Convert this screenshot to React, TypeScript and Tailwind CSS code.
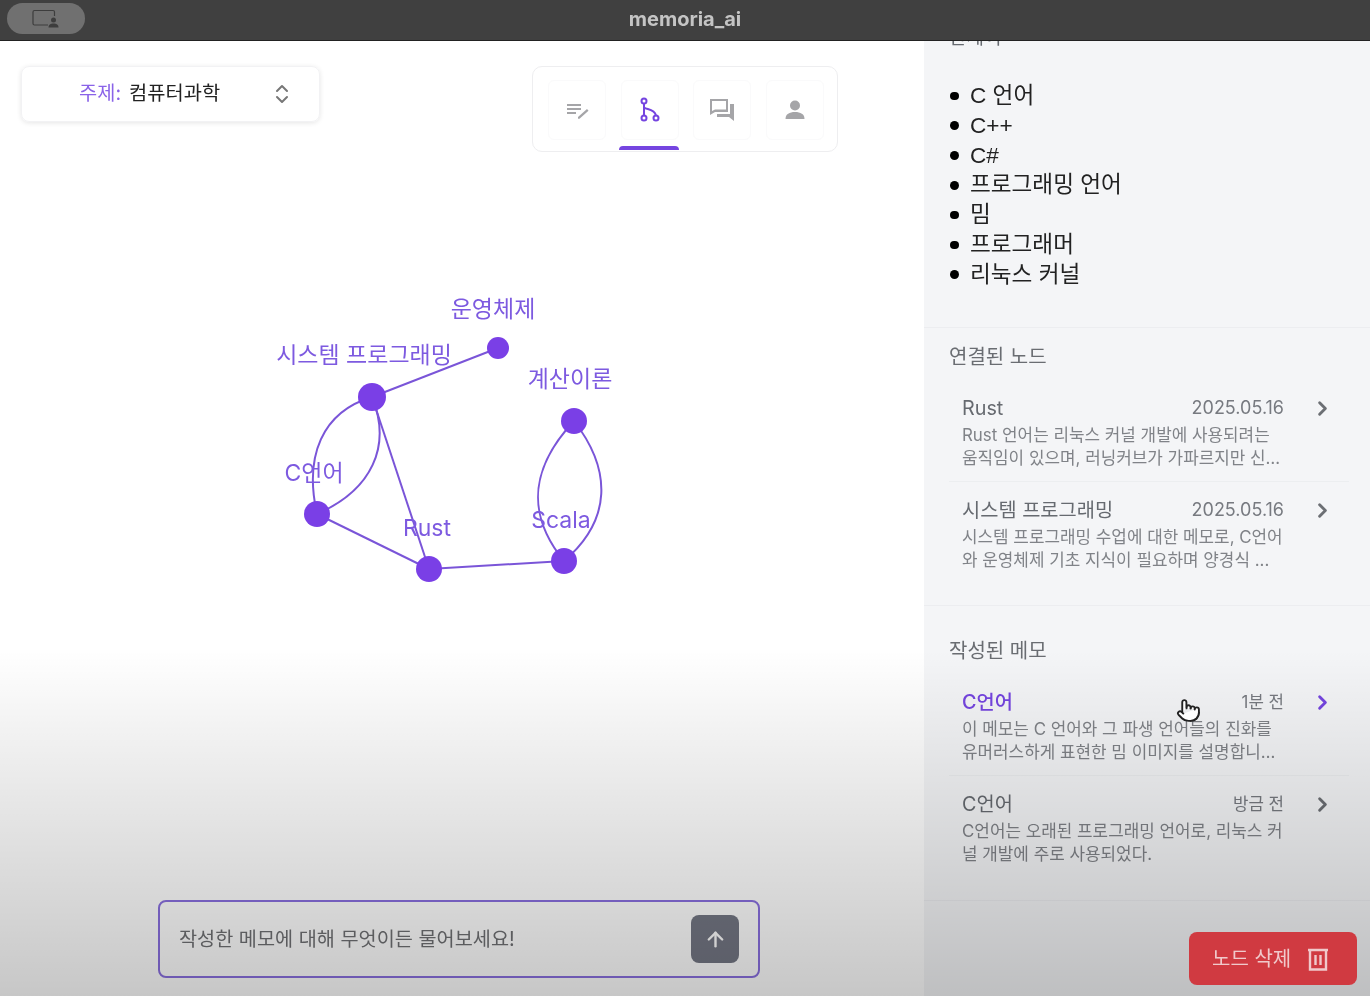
import { ArrowUp, ChevronRight, ChevronsUpDown, Pointer } from 'lucide-react';

const KO = 'font-["Inter","Noto_Sans_CJK_KR",sans-serif]';

const keywords = ['C 언어', 'C++', 'C#', '프로그래밍 언어', '밈', '프로그래머', '리눅스 커널'];

type Item = { title: string; date: string; active?: boolean; relative?: boolean; lines: string[] };

const linkedNodes: Item[] = [
    {
        title: 'Rust',
        date: '2025.05.16',
        lines: ['Rust 언어는 리눅스 커널 개발에 사용되려는', '움직임이 있으며, 러닝커브가 가파르지만 신…'],
    },
    {
        title: '시스템 프로그래밍',
        date: '2025.05.16',
        lines: ['시스템 프로그래밍 수업에 대한 메모로, C언어', '와 운영체제 기초 지식이 필요하며 양경식 ...'],
    },
];

const memos: Item[] = [
    {
        title: 'C언어',
        date: '1분 전',
        active: true,
        relative: true,
        lines: ['이 메모는 C 언어와 그 파생 언어들의 진화를', '유머러스하게 표현한 밈 이미지를 설명합니…'],
    },
    {
        title: 'C언어',
        date: '방금 전',
        relative: true,
        lines: ['C언어는 오래된 프로그래밍 언어로, 리눅스 커', '널 개발에 주로 사용되었다.'],
    },
];

const nodes = [
    { label: '운영체제', x: 498, y: 348, r: 11, lx: 493, ly: 317 },
    { label: '시스템 프로그래밍', x: 372, y: 397, r: 14, lx: 364, ly: 363 },
    { label: '계산이론', x: 574, y: 421, r: 13, lx: 570, ly: 387 },
    { label: 'C언어', x: 317, y: 514, r: 13, lx: 314, ly: 481 },
    { label: 'Rust', x: 429, y: 569, r: 13, lx: 427, ly: 536 },
    { label: 'Scala', x: 564, y: 561, r: 13, lx: 561, ly: 528 },
];

const edges = [
    'M372 397 L498 348',
    'M372 397 L429 569',
    'M317 514 L429 569',
    'M429 569 L564 561',
    'M372 397 C322 412 304 456 317 514',
    'M372 397 C392 446 372 490 317 514',
    'M574 421 C532 466 524 512 564 561',
    'M574 421 C612 470 612 520 564 561',
];

function NodeRow({ item }: { item: Item }) {
    return (
        <div className="flex h-[102px] items-start border-b border-[#eceef0] pl-[13px] pr-[15px] pt-[13px] last:border-b-0">
            <div className="w-[322px] shrink-0">
                <div className="flex items-center justify-between">
                    <span className={`text-[19.800px] leading-[30px] ${item.active ? 'font-medium text-[#7545e0]' : 'text-[#666a70]'}`}>{item.title}</span>
                    <span className={`leading-[30px] text-[#777a80] ${item.relative ? 'text-[16.800px]' : 'text-[18px]'}`}>{item.date}</span>
                </div>
                <div className="mt-[1px] text-[16.900px] leading-[22.5px] whitespace-nowrap text-[#808388]">
                    {item.lines.map((line) => (
                        <div key={line}>{line}</div>
                    ))}
                </div>
            </div>
            <ChevronRight
                size={23}
                strokeWidth={3}
                className={`ml-[27px] mt-[4px] shrink-0 ${item.active ? 'text-[#7545e0]' : 'text-[#6c6f74]'}`}
            />
        </div>
    );
}

export default function App() {
    return (
        <div className={`relative flex h-[996px] w-[1370px] flex-col overflow-hidden bg-white blur-[0.5px] ${KO}`}>
            {/* Title bar */}
            <div className="relative flex h-[41px] shrink-0 items-center justify-center border-b border-[#222] bg-[#404040]">
                <div className="absolute left-[7px] top-[3px] flex h-[31px] w-[78px] items-center justify-center rounded-full bg-[#707070]">
                    <svg width="28" height="20" viewBox="0 0 28 20" fill="none">
                        <path d="M16 16H2.5A1.5 1.5 0 0 1 1 14.500V3A1.500 1.500 0 0 1 2.500 1.500H21A1.500 1.500 0 0 1 22.500 3V7" stroke="#3d3d3d" strokeWidth="1.2" />
                        <circle cx="21.500" cy="11" r="2.500" fill="#3d3d3d" />
                        <path d="M16.500 18.500C16.500 15.500 18.500 14.500 21.500 14.500S26.500 15.500 26.500 18.500Z" fill="#3d3d3d" />
                    </svg>
                </div>
                <span className="-mt-[2px] text-[20px] font-bold text-[#c4c4c4]">memoria_ai</span>
            </div>

            <div className="flex min-h-0 flex-1">
                {/* Graph side */}
                <div className="flex w-[924px] shrink-0 flex-col">
                    <div className="flex h-[111px] shrink-0 items-start justify-between pl-[21px] pr-[86px] pt-[25px]">
                        <div className="flex h-[56px] w-[299px] items-center rounded-lg border border-[#f2f2f4] pl-[57px] pr-[25px] shadow-[0_1px_5px_rgba(0,0,0,0.1)]">
                            <span className="text-[19.800px] text-[#8a63e8]">주제:</span>
                            <span className="ml-[8px] text-[19.800px] text-[#222]">컴퓨터과학</span>
                            <ChevronsUpDown size={24} strokeWidth={2} className="ml-auto text-[#777]" />
                        </div>
                        <div className="flex h-[86px] w-[306px] gap-[14.5px] rounded-[10px] border border-[#eeeef0] pl-[15px] pt-[13px]">
                            <div className="flex h-[60px] w-[58px] items-center justify-center rounded-md border border-[#fafafb]">
                                <svg width="24" height="24" viewBox="0 0 24 24" fill="#a5a5a8">
                                    <path d="M2 6h14v2H2zM2 10h14v2H2zM2 14h9v2H2zM13 19l9-8 1.500 1.700-9 8H13z" />
                                </svg>
                            </div>
                            <div className="relative flex h-[60px] w-[58px] items-center justify-center rounded-md border border-[#fafafb]">
                                <svg width="24" height="26" viewBox="0 0 24 26" fill="none" stroke="#7545e0" strokeWidth="2">
                                    <circle cx="6" cy="4" r="2.500" />
                                    <circle cx="6" cy="21" r="2.500" />
                                    <circle cx="18" cy="21" r="2.500" />
                                    <path d="M6 6.500V18.500M6 10C7 13 16 11 18 18.500" />
                                </svg>
                                <div className="absolute bottom-[-11px] left-[-3px] h-[4px] w-[60px] rounded-t-[4px] bg-[#7545e0]" />
                            </div>
                            <div className="flex h-[60px] w-[58px] items-center justify-center rounded-md border border-[#fafafb]">
                                <svg width="26" height="24" viewBox="0 0 26 24" fill="#a5a5a8">
                                    <path d="M1 1h18v13H6l-5 3zM3 3v10l3-1.500h11V3z" />
                                    <path d="M21 6h4v17l-5-4H8v-3h13z" />
                                </svg>
                            </div>
                            <div className="flex h-[60px] w-[58px] items-center justify-center rounded-md border border-[#fafafb]">
                                <svg width="24" height="24" viewBox="0 0 24 24" fill="#a5a5a8">
                                    <circle cx="12" cy="7.500" r="5" />
                                    <path d="M2.500 21c0-5 4-7 9.500-7s9.500 2 9.500 7z" />
                                </svg>
                            </div>
                        </div>
                    </div>

                    {/* Graph: viewBox uses page coordinates */}
                    <svg className="min-h-0 w-[924px] flex-1" viewBox="0 152 924 748" fill="none">
                        {edges.map((d) => (
                            <path key={d} d={d} stroke="#7a55d8" strokeWidth="2" />
                        ))}
                        {nodes.map((n) => (
                            <circle key={n.label} cx={n.x} cy={n.y} r={n.r} fill="#7a3fe6" />
                        ))}
                        {nodes.map((n) => (
                            <text key={n.label} x={n.lx} y={n.ly} textAnchor="middle" fontSize="23" fill="#7d5ae0">
                                {n.label}
                            </text>
                        ))}
                    </svg>

                    <div className="shrink-0 pb-[18px] pl-[158px]">
                        <div className="flex h-[78px] w-[602px] items-center rounded-lg border-2 border-[#8a70e0] pl-[19px] pr-[19px]">
                            <span className="mt-[1px] text-[19.700px] text-[#707174]">작성한 메모에 대해 무엇이든 물어보세요!</span>
                            <div className="ml-auto flex h-[48px] w-[48px] items-center justify-center rounded-lg bg-[#747784]">
                                <ArrowUp size={23} strokeWidth={2.500} className="text-white" />
                            </div>
                        </div>
                    </div>
                </div>

                {/* Detail panel */}
                <div className="min-w-0 flex-1 overflow-hidden bg-[#f4f5f7]">
                    <div className="-mt-[15px] h-[302px] border-b border-[#ecedf0] pl-[25px]">
                        <div className="text-[19px] leading-[24px] text-[#666a70]">관계어</div>
                        <ul className="mt-[31px] font-['Liberation_Sans','Noto_Sans_CJK_KR',sans-serif] text-[22.600px] text-[#222]">
                            {keywords.map((k) => (
                                <li key={k} className="flex h-[29.800px] items-center gap-[11.500px] pl-[1px] leading-[30px]">
                                    <span className="h-[8.500px] w-[8.500px] rounded-full bg-black" />
                                    {k}
                                </li>
                            ))}
                        </ul>
                    </div>

                    <div className="h-[278px] border-b border-[#ecedf0] pl-[25px] pt-[15px]">
                        <div className="text-[20px] leading-[28px] text-[#6a6d72]">연결된 노드</div>
                        <div className="mt-[9px] w-[400px]">
                            {linkedNodes.map((item) => (
                                <NodeRow key={item.title} item={item} />
                            ))}
                        </div>
                    </div>

                    <div className="h-[295px] border-b border-[#ecedf0] pl-[25px] pt-[31px]">
                        <div className="text-[20px] leading-[28px] text-[#6a6d72]">작성된 메모</div>
                        <div className="mt-[9px] w-[400px]">
                            {memos.map((item) => (
                                <NodeRow key={item.date} item={item} />
                            ))}
                        </div>
                    </div>
                </div>
            </div>

            {/* Fade over the bottom of the window */}
            <div className="pointer-events-none absolute inset-x-0 bottom-0 h-[346px] bg-gradient-to-b from-[#ffffff00] to-[#00000038]" />

            <div className="absolute left-[1189px] top-[932px] flex h-[53px] w-[168px] items-center gap-[16px] rounded-lg bg-[#d03a41] pl-[23px]">
                <span className="text-[20px] text-[#f0c9cb]">노드 삭제</span>
                <svg width="22" height="24" viewBox="0 0 22 24" fill="none" stroke="#f0c9cb" strokeWidth="2.400">
                    <path d="M1 3h20M3 3v19.500h16V3M8.500 8v10M13.500 8v10" />
                </svg>
            </div>

            <Pointer size={25} strokeWidth={1.800} className="absolute left-[1176px] top-[698px] fill-white text-[#222]" />
        </div>
    );
}
